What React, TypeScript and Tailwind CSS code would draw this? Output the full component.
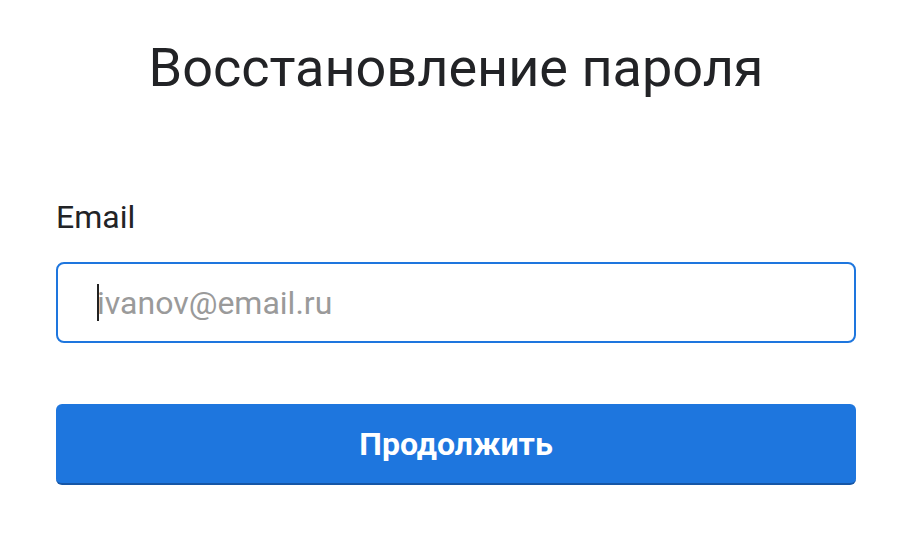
export default function App() {
  return (
    <div
      className="w-[910px] h-[550px] bg-white pl-14 pr-[54px]"
      style={{ fontFamily: "Roboto, 'Noto Sans', sans-serif" }}
    >
      <h1 className="pt-[36px] text-center text-[54px] leading-[64px] text-[#222326] font-normal">
        Восстановление пароля
      </h1>
      <label className="block mt-[98px] text-[32px] leading-[38px] text-[#222326]">
        Email
      </label>
      <div className="relative mt-[26px] h-[81px] rounded-[8px] border-2 border-[#1e76de] flex items-center pl-[39px]">
        <span className="text-[32px] leading-[38px] text-[#9a9a9a]">ivanov@email.ru</span>
        <div className="absolute left-[39px] top-[20px] w-[2px] h-[37px] bg-[#222]" />
      </div>
      <button className="mt-[61px] w-full h-[81px] rounded-[6px] bg-[#1e76de] border-b-2 border-[#1656a6] text-white text-[32px] leading-[38px] font-bold">
        Продолжить
      </button>
    </div>
  );
}
